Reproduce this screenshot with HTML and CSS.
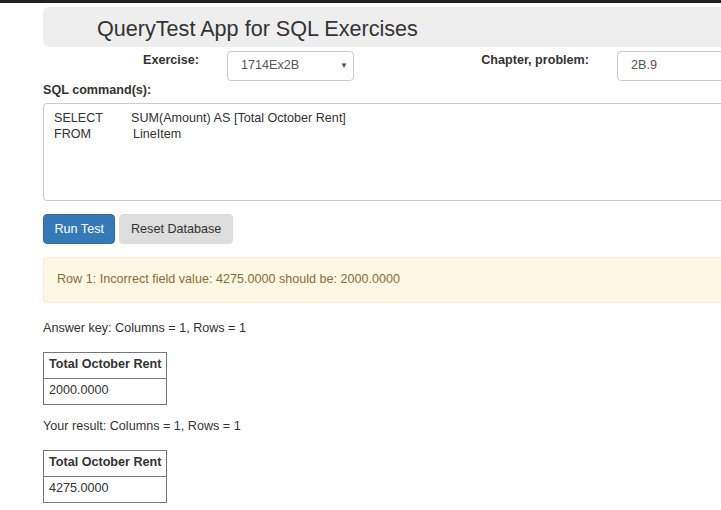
FILE: index.html
```html
<!DOCTYPE html>
<html>
<head>
<meta charset="utf-8">
<link rel="stylesheet" href="styles.css">
</head>
<body>
<div class="topbar"></div>
<div class="page">
  <div class="jumbo"><h1 class="title">QueryTest App for SQL Exercises</h1></div>
  <div class="formrow">
    <label class="lbl">Exercise:</label>
    <div class="select"><span>1714Ex2B</span><span class="arrow">&#9660;</span></div>
    <label class="lbl">Chapter, problem:</label>
    <div class="input">2B.9</div>
  </div>
  <div class="sqllbl">SQL command(s):</div>
  <div class="textarea">
    <div class="line"><span class="kw">SELECT</span><span>SUM(Amount) AS [Total October Rent]</span></div>
    <div class="line"><span class="kw kw2">FROM</span><span>LineItem</span></div>
  </div>
  <div class="buttons">
    <button class="btn btn-primary">Run Test</button>
    <button class="btn btn-default">Reset Database</button>
  </div>
  <div class="alert">Row 1: Incorrect field value: 4275.0000 should be: 2000.0000</div>
  <p class="info">Answer key: Columns = 1, Rows = 1</p>
  <table class="res">
    <tr><th>Total October Rent</th></tr>
    <tr><td>2000.0000</td></tr>
  </table>
  <p class="info info2">Your result: Columns = 1, Rows = 1</p>
  <table class="res">
    <tr><th>Total October Rent</th></tr>
    <tr><td>4275.0000</td></tr>
  </table>
</div>
</body>
</html>
```
FILE: styles.css
```css
html, body {
  margin: 0;
  padding: 0;
  background: #fff;
  overflow: hidden;
}
body {
  font-family: "Liberation Sans", Arial, sans-serif;
  font-size: 12.6px;
  color: #333;
  line-height: 1.42857;
}
.topbar {
  height: 3px;
  background: #222;
}
.page {
  padding-left: 43px;
  padding-top: 4px;
  width: 760px;
}
.jumbo {
  background: #eee;
  border-radius: 6px;
  height: 40px;
  padding-left: 54px;
  display: flex;
  align-items: center;
}
.title {
  margin: 0;
  font-weight: normal;
  font-size: 21.6px;
  color: #333;
  line-height: 1;
  padding-top: 3px;
}
.formrow {
  display: grid;
  grid-template-columns: 184px 127px 263px 160px;
  margin-top: 4px;
  align-items: start;
}
.lbl {
  font-weight: bold;
  text-align: right;
  padding-right: 28px;
  padding-top: 1px;
}
.select, .input {
  height: 30px;
  box-sizing: border-box;
  border: 1px solid #ccc;
  border-radius: 4px;
  padding: 0 5px 0 13px;
  display: flex;
  align-items: center;
  justify-content: space-between;
  color: #555;
}
.arrow {
  font-size: 8px;
  color: #555;
}
.sqllbl {
  font-weight: bold;
  margin-top: 1px;
  height: 20px;
}
.textarea {
  margin-top: 1px;
  height: 98px;
  box-sizing: border-box;
  border: 1px solid #ccc;
  border-radius: 4px;
  padding: 6px 10px;
  line-height: 16px;
  color: #333;
}
.kw {
  display: inline-block;
  width: 77px;
}
.kw2 {
  width: 79px;
}
.buttons {
  display: flex;
  gap: 4px;
  margin-top: 13px;
}
.btn {
  font-family: inherit;
  font-size: 12.6px;
  height: 30px;
  border-radius: 4px;
  border: 1px solid transparent;
  padding: 0 10.5px;
  cursor: pointer;
}
.btn-primary {
  background: #337ab7;
  border-color: #2e6da4;
  color: #fff;
}
.btn-default {
  background: #ddd;
  border-color: #ddd;
  color: #333;
}
.alert {
  margin-top: 13px;
  height: 46px;
  box-sizing: border-box;
  background: #fcf8e3;
  border: 1px solid #faebcc;
  border-radius: 4px;
  color: #8a6d3b;
  padding: 0 13px;
  display: flex;
  align-items: center;
}
.info {
  margin: 17px 0 14px;
}
.info2 {
  margin: 13px 0 14px;
}
.res {
  border-collapse: collapse;
}
.res th, .res td {
  border: 1px solid #777;
  text-align: left;
  padding: 0 5px;
  height: 25px;
  font-size: 12.6px;
}
.res th {
  font-weight: bold;
}
```
